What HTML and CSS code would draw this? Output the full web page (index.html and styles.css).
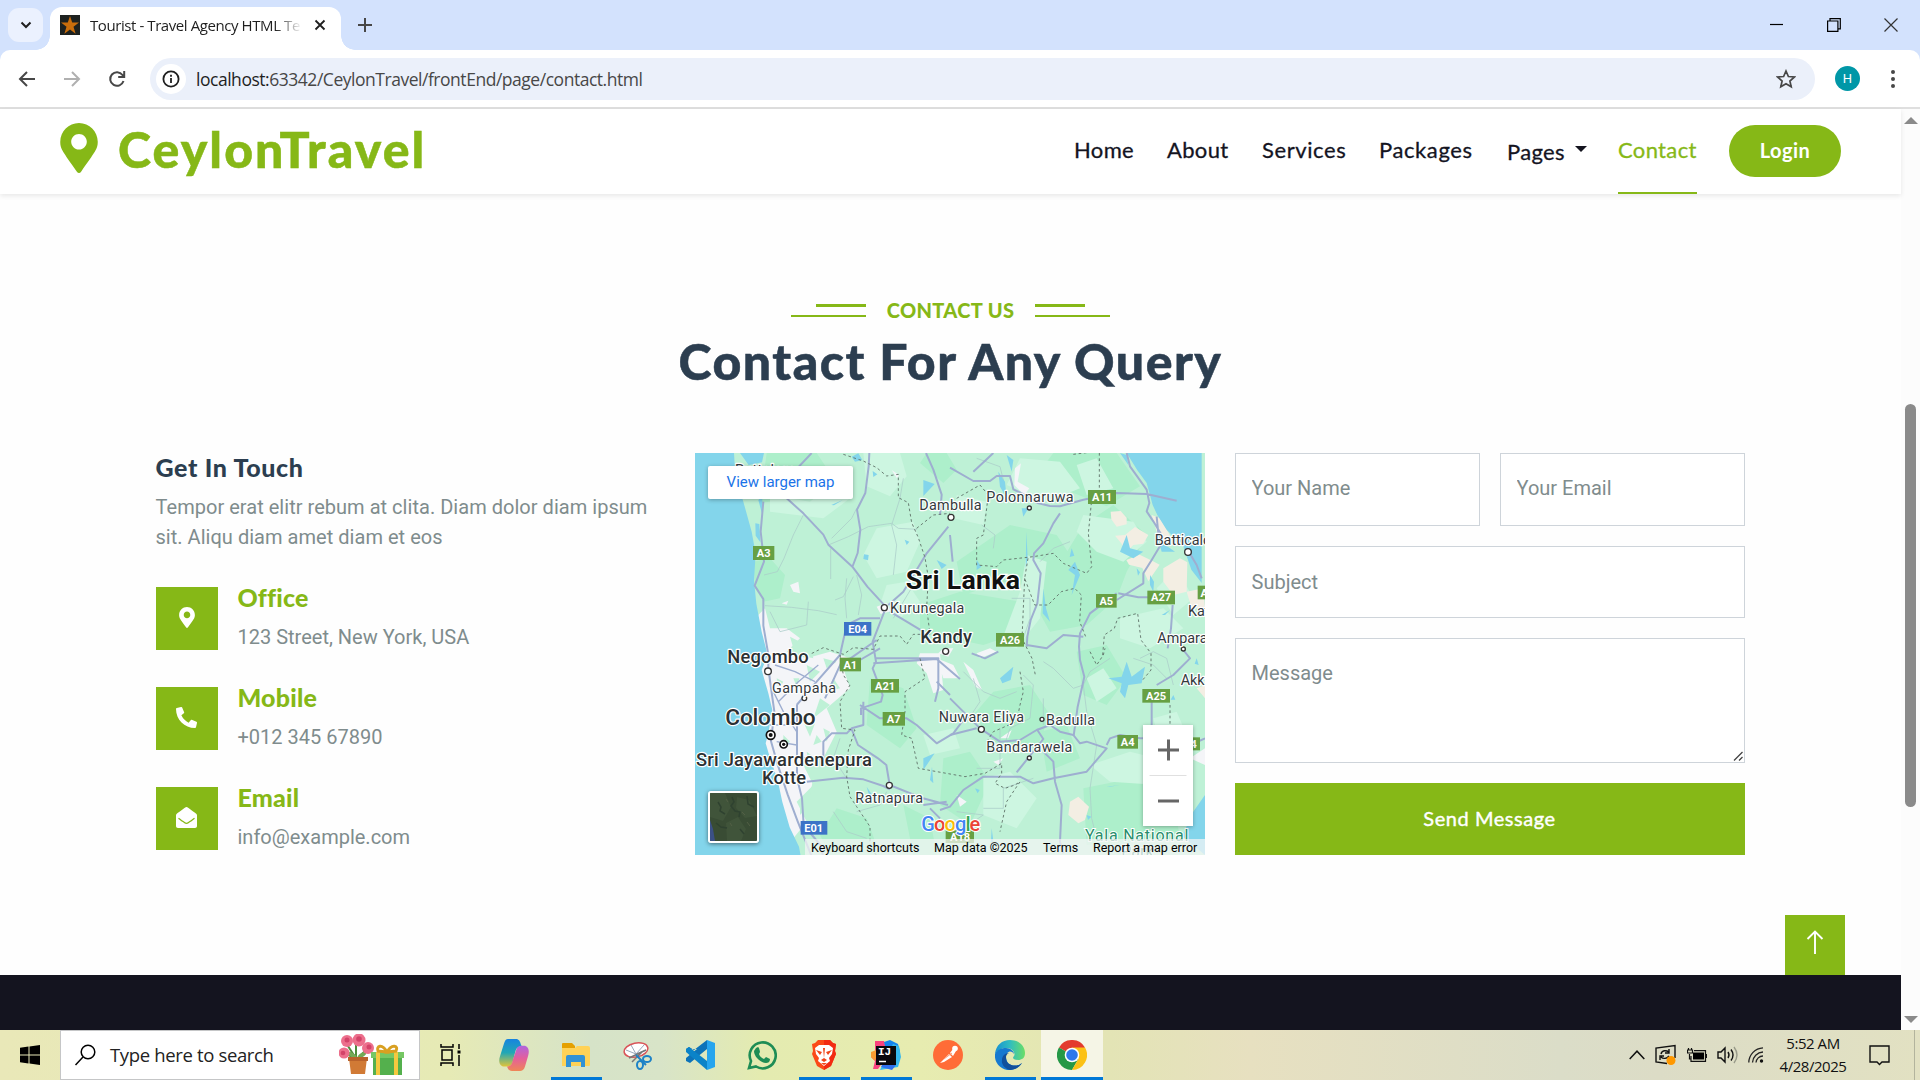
FILE: index.html
```html
<!DOCTYPE html>
<html lang="en">
<head>
<meta charset="utf-8">
<title>Tourist - Travel Agency HTML Template</title>
<link rel="stylesheet" href="styles.css">
</head>
<body>
<header class="tabstrip">
  <div class="tab-search"><svg width="12" height="12" viewBox="0 0 12 12"><path d="M1.5 3.5 6 8l4.500-4.500" fill="none" stroke="#1f1f1f" stroke-width="2"/></svg></div>
  <div class="tab">
    <svg class="favicon" width="20" height="20" viewBox="0 0 20 20"><rect width="20" height="20" fill="#1d2120"/><path d="M10 1l2.200 6.500H19l-5.500 4.200 2.100 7L10 14.600l-5.600 4.100 2.100-7L1 7.500h6.800z" fill="#c96d0c"/></svg>
    <span class="tab-title">Tourist - Travel Agency HTML Te</span>
    <svg class="tab-close" width="12" height="12" viewBox="0 0 12 12"><path d="M1.500 1.500l9 9m0-9l-9 9" stroke="#1f1f1f" stroke-width="1.800"/></svg>
  </div>
  <svg class="tab-new" width="14" height="14" viewBox="0 0 14 14"><path d="M7 0v14M0 7h14" stroke="#474747" stroke-width="2"/></svg>
  <div class="window-controls">
    <svg width="14" height="14" viewBox="0 0 14 14"><path d="M0 6.500h13" stroke="#000" stroke-width="1.200"/></svg>
    <svg width="14" height="14" viewBox="0 0 14 14" fill="none" stroke="#000" stroke-width="1.200"><path d="M.6 3h10.300v10.300H.6zM3 3V.6h10.300v10.300H11"/></svg>
    <svg width="14" height="14" viewBox="0 0 14 14"><path d="M.5.5l13 13m0-13l-13 13" stroke="#333" stroke-width="1.200"/></svg>
  </div>
</header>
<div class="toolbar-wrap">
<div class="toolbar">
  <svg class="nav-icon" width="18" height="18" viewBox="0 0 18 18" fill="none" stroke="#474747" stroke-width="2"><path d="M17 9H2.500M9 2L2 9l7 7"/></svg>
  <svg class="nav-icon" width="18" height="18" viewBox="0 0 18 18" fill="none" stroke="#b0b0b0" stroke-width="2"><path d="M1 9h14.500M9 2l7 7-7 7"/></svg>
  <svg class="nav-icon" width="18" height="18" viewBox="0 0 18 18" fill="none" stroke="#474747" stroke-width="2"><path d="M15.500 11A6.800 6.800 0 1 1 14.500 5L16 6.600M16.200 1v6h-6"/></svg>
  <div class="omnibox">
    <span class="site-info"><svg width="18" height="18" viewBox="0 0 18 18"><circle cx="9" cy="9" r="7.600" fill="none" stroke="#1f1f1f" stroke-width="1.800"/><path d="M9 8v5M9 4.700v2" stroke="#1f1f1f" stroke-width="1.800"/></svg></span>
    <span class="url"><b>localhost:</b>63342/CeylonTravel/frontEnd/page/contact.html</span>
    <svg class="star" width="20" height="20" viewBox="0 0 20 20"><path d="M10 2l2.400 5.500 6 .5-4.500 4 1.300 5.800L10 14.700l-5.200 3.100L6.100 12 1.600 8l6-.5z" fill="none" stroke="#474747" stroke-width="1.700"/></svg>
  </div>
  <span class="avatar">H</span>
  <svg class="kebab" width="6" height="20" viewBox="0 0 6 20" fill="#474747"><circle cx="3" cy="3" r="2"/><circle cx="3" cy="10" r="2"/><circle cx="3" cy="17" r="2"/></svg>
</div>
</div>

<div class="viewport">
<main class="page">
  <nav class="navbar">
    <a class="brand">
      <svg class="brand-pin" width="38" height="50" viewBox="0 0 384 512"><path fill="#86b817" d="M172.268 501.670C26.970 291.031 0 269.413 0 192 0 85.961 85.961 0 192 0s192 85.961 192 192c0 77.413-26.970 99.031-172.268 309.670-9.535 13.774-29.930 13.773-39.464 0zM192 272c44.183 0 80-35.817 80-80s-35.817-80-80-80-80 35.817-80 80 35.817 80 80 80z"/></svg>
      <span class="brand-name">CeylonTravel</span>
    </a>
    <div class="menu">
      <a class="menu-item home">Home</a>
      <a class="menu-item about">About</a>
      <a class="menu-item services">Services</a>
      <a class="menu-item packages">Packages</a>
      <a class="menu-item pages">Pages<i class="caret"></i></a>
      <a class="menu-item contact active">Contact</a>
      <a class="login">Login</a>
    </div>
  </nav>

  <section class="contact-section">
    <div class="heading">
      <div class="kicker">
        <span class="lines left"><i></i><i></i></span>
        <span class="kicker-text">CONTACT US</span>
        <span class="lines right"><i></i><i></i></span>
      </div>
      <h1>Contact For Any Query</h1>
    </div>
    <div class="columns">
      <div class="info">
        <h5 class="touch">Get In Touch</h5>
        <p class="intro">Tempor erat elitr rebum at clita. Diam dolor diam ipsum sit. Aliqu diam amet diam et eos</p>
        <div class="row">
          <span class="row-icon"><svg width="16" height="21" viewBox="0 0 384 512"><path fill="#fff" d="M172.268 501.670C26.970 291.031 0 269.413 0 192 0 85.961 85.961 0 192 0s192 85.961 192 192c0 77.413-26.970 99.031-172.268 309.670-9.535 13.774-29.930 13.773-39.464 0zM192 272c44.183 0 80-35.817 80-80s-35.817-80-80-80-80 35.817-80 80 35.817 80 80 80z"/></svg></span>
          <div><h5>Office</h5><p>123 Street, New York, USA</p></div>
        </div>
        <div class="row">
          <span class="row-icon"><svg width="21" height="21" viewBox="0 0 512 512"><path fill="#fff" d="M497.390 361.800l-112-48a24 24 0 0 0-28 6.900l-49.600 60.600A370.660 370.660 0 0 1 130.600 204.110l60.600-49.600a23.940 23.940 0 0 0 6.900-28l-48-112A24.160 24.160 0 0 0 122.600.61l-104 24A24 24 0 0 0 0 48c0 256.500 207.900 464 464 464a24 24 0 0 0 23.400-18.600l24-104a24.290 24.290 0 0 0-14.010-27.600z"/></svg></span>
          <div><h5>Mobile</h5><p>+012 345 67890</p></div>
        </div>
        <div class="row">
          <span class="row-icon"><svg width="21" height="21" viewBox="0 0 512 512"><path fill="#fff" d="M512 464c0 26.510-21.490 48-48 48H48c-26.510 0-48-21.490-48-48V200.724a48 48 0 0 1 18.387-37.776c24.913-19.529 45.501-35.365 164.200-121.511C199.412 29.170 232.797-.347 256 .003c23.198-.354 56.596 29.172 73.413 41.433 118.687 86.137 139.303 101.995 164.200 121.512A48 48 0 0 1 512 200.724V464zm-65.666-196.605c-2.563-3.728-7.700-4.595-11.339-1.907-22.845 16.873-55.462 40.705-105.582 77.079-16.825 12.266-50.210 41.781-73.413 41.430-23.211.344-56.559-29.143-73.413-41.430-50.114-36.370-82.734-60.204-105.582-77.079-3.639-2.688-8.776-1.821-11.339 1.907l-9.072 13.196a7.998 7.998 0 0 0 1.839 10.967c22.887 16.899 55.454 40.690 105.303 76.868 20.274 14.781 56.524 47.813 92.264 47.573 35.724.242 71.961-32.771 92.263-47.573 49.850-36.179 82.418-59.970 105.303-76.868a7.998 7.998 0 0 0 1.839-10.967l-9.071-13.196z"/></svg></span>
          <div><h5>Email</h5><p>info@example.com</p></div>
        </div>
      </div>

      <div class="map">
        <svg class="map-canvas" width="510" height="402" viewBox="15 24 1530 1206">
          <rect x="15" y="24" width="1530" height="1206" fill="#bef1d6"/>
          <!-- vegetation -->
          <g fill="#adefcb">
            <path d="M230 24h150l40 60-60 70-150 20zM190 350l50-10 45 50-15 70-50 10-25-40zM770 24l30 50-40 40-70-60 20-30zM1090 24h190l70 100-100 60-150-60-40-60zM960 240l140 30 60 90-40 80-180-30-120 40-20-100zM1180 240l90-60 100 90-60 110-30 80-90 80-110 20-50-90 40-50zM690 480l120-40 180 30 10 90-120 40-190-40zM540 700l100 30 40 120-50 60-100-70zM1160 620l90-20 60 100-60 80-70-30zM910 740l110-20 60 90-40 100-130-20-60-80zM1050 860l80-20 40 100-100 40zM1180 1030l150-30 120 60 20 120-280 20zM440 1090l90 30 40 110H420l-30-60zM760 940l80-20 60 90-60 130-90-60zM640 1080l80 40 20 110h-70z"/>
          </g>
          <g fill="#cdf6e1">
            <path d="M520 24h110l20 70-50 60-70-30zM560 250l110-20 20 60-40 90-90 20-40-70zM240 150l120 20 60-50 60 40-80 60-160-20zM990 40l120 10 60 80-100 40-120-50zM1180 210l150 20 40 60-70 60-80-30-60-60zM800 150l90 20-10 70-90-20zM1010 330l60 20-20 170-70 90-50-10 60-160zM1400 430l60-60 50 90-60 50zM1290 520l130-30 60 60-100 60-90-30zM1200 960l120-40 160 40-70 60-150-10zM590 420l60-10 40 60-60 50-60-40zM1160 60l60-20 50 90-80 20zM1190 700l50-30 40 60-60 40zM700 870l90-20 20 60-90 20zM880 1000l80-20 80 80-60 90-100-40zM1390 820l70-20 30 70-80 30z"/>
          </g>
          <!-- built-up and sand -->
          <g fill="#f4f5f8">
            <path d="M205 510l20-20 15 60 50 0 40 30-40 40 60 20 70-20 60 20-20 30 20 60-70 60 30 70-40 80-60 20 30 60-50 50 30 60-40 50 20 70 0 40-25 10-60-160-45-110-15-100 10-90-20-80-20-90zM690 625l60 0 10 110-30 10-20-60-30-30zM740 640l50 20 20 40-50 0zM300 420l25-10 5 35-20-5zM975 70l18-15-10 55 35 20-15 20-30-30zM820 650l30 25 26 60-20-10zM800 1050l30 20-20 15zM560 485l30-12 12 26-30 8zM860 625l40-15 20 10-50 20zM760 610l30 0-15 25-30-10zM930 880l35-25-10 25zM1500 940l45 20v-50zM910 950l30-10-15 20zM275 475l20-8-5 12zM605 75l22 15-6 10z"/>
          </g>
          <g fill="#f3eee3">
            <path d="M1262 200l30-2 18 20 0 20-30 7-16-22zM1275 272l30-2 30-24 20 12 20 12-15 26-30 4-25 24-10-28zM1309 345l40-16 40 20 20 10-34 50-18-40-40-10zM1420 370l50-30 22 12-2 88-40 10-30-40zM1385 210l25 10 35 60-15 25-30-45zM1490 440l50-10 5 60-40 0zM1140 1070l25-15 32 30-12 40-20 10-30-25zM1520 730l25-10v40z"/>
          </g>
          <g fill="#bef1d6">
            <path d="M300 575l30 15-20 20zM350 660l40 20-30 30zM390 760l30 20-50 40zM340 830l35 5-15 40zM280 870l20 20-20 20zM330 630l30-20 10 30zM400 640l40 10-30 20zM350 920l40 30-30 20zM370 1000l30 20-40 30zM260 700l20 10-15 25zM430 700l20 30-40 10zM380 870l15 20-25 10zM310 700l18 0-8 25zM330 1060l20 30-20 20zM300 980l20 10-10 20zM400 850l20 10-10 30z"/>
          </g>
          <!-- water -->
          <g fill="#83d5eb">
            <path d="M15 24h117l4 70 24 76 25 90 12 66-5 80 7 70 16 84 18 70-18 45 20 70 12 50-12 70-8 30 12 40 24 70 14 66 22 76 28 58 10 55H15z"/>
            <path d="M1310 24l32 52 28 38 18 66 14 30 28 44 50 50 24 70 31 40V24z"/>
            <path d="M1545 1050l-38 54-30 70 68 56z"/>
            <path d="M150 24h72l-6 28-40 8zM196 235l12 2 3 55-14-20zM205 165l12-10v55zM424 180l34-15-26 16zM485 35l20-10 12 20-22 5zM548 78l14 10-12 8zM700 105l34 12-34 36zM644 284l14 6-8 10zM522 328l14 2-2 16-14-4zM925 80l20 30 5 50-20-35zM950 30l20 15-5 35zM995 190l20 0-15 25zM1145 310l8 22-14 4zM1155 350l15 40-25 60 10-60-20-15zM1060 430l8 60 12 40-22-25zM740 345l30 15-15 12zM860 345l14 20-14 10zM1009 260l4 80-6 30zM1310 270l10 40 40 10-30 20-40-20zM1405 285l50 35-40 0zM1380 390l12 20-2 30-10-20zM1415 510l25-15-15 15zM1340 370l10 12-6 10zM930 700l40-35-8 40-25 10zM1310 650l15 45 40-30-10 50-40 5-10 40-15-20 5-25-40-15 40-5zM700 940l34-15-34 50zM720 1005l6-40 4 50zM530 1025l20 30-10 6zM905 1150l8 60-12 15zM1190 1110l14 5-10 10zM1520 640l6 20-12-4zM1450 750l6 14-14 0zM1250 1025l40-5-30 5zM855 1030l14 5-6 10zM1290 24l20 6 5 30z"/>
          </g>
          <!-- local roads -->
          <g fill="none" stroke="#abcdca" stroke-width="2.300">
            <path d="M340 210l-30 60-28 70-20 40-40 10M415 300l60-25 60-30 70-10 20 15 56 3M422 310v92M500 190l-15 30-60 60M225 482l80 5 80 10 55 12M470 400l-5 60 5 60M490 395l-30 60-25 10M500 390l15 60-10 60M640 100l-10 60-25 80 15 60-10 90M700 390l-30 30-60 100M240 500l30 60 80-20 5-70M860 40l70 25 10 40M875 240l40 30-5 40M965 460h55v60l-20 60M1050 350l40-40 50-20M1330 640l60 20 40 40M1180 720l10 80 30 100-20 130 5 90 20 80M850 700l20 70-40 60M820 680l60 60 50 20 50-20M1000 690l30 30-10 100-60 30-20 60M880 1090h60v-60l90-30M800 1100l80 10-60 40M450 880l-20 60 40 60M500 1100l70-20 20-40M1060 760v80M430 1100l40 60 60 20"/>
            <path d="M930 850v120h-70M1060 650l30 20 60 60 30-10 20-40 60-40M1350 640l40-20 40 20 20 80"/>
          </g>
          <!-- highways -->
          <g fill="none" stroke="#9eaed0" stroke-width="6" stroke-linejoin="round">
            <path d="M365 24l-80 85M290 160l50 45 60 64 15 30 72 66 45 60 55 60M538 24l-2 40-10 80-25 50 10 60-8 70-16 42M220 170l-8 90 10 90-28 72 26 40v80l15 87 0 40 8 60 10 70-10 90 20 70 30 90 30 80 40 100 12 30M708 24l22 50 25 75-5 60M595 480l45-40 70-115 65-80M780 68l70 40h50l20-15 40 0 10 40 40 20 30 20 40 10 30 1 70-20 100-20 90 3 90 20M1310 24l10 40 50 70 8 40-8 25 20 30 30 50M1400 215l5 50 10 30-30 50-25 40v30l-80 50M1110 205l-20 30-30 60-28 30-2 20 22 40-10 90-20 50-10 50-2 30M1280 445l-80 60-30 60-3 40 3 40 13 50-20 90-12 87"/>
            <path d="M850 80l60-56M780 270l8 80M600 500l50 30 50 30M1010 600l60 10 50-40 60 5M570 520l-60 0-40 20-20 90-70 80-60 70M583 500l-35 90 10 60-10 20 30 80-5 20-60 20v20M455 650l-50 110M460 655l100-70M570 610l-60 35M550 655l190-13 70 60M555 640h190v90l-10 40M1285 445l60 12h40M1448 480l-5 70-10 60M845 625l40 15 40-20"/>
            <path d="M510 780l60 40 80 0 30 20 60 55 50-30 30-40M740 710l40 40M520 770v70l-35 10-15 15h-45l-25 25v50l-70-1M321 780v220l15 60 5 80 50 60 10 40M484 850l20 50 60 40 25 20 10 60 100 40 75 20M350 1010l110-12 60 5 60 20 20 10M700 1080l70-10M720 1090l30 30"/>
            <path d="M780 760l90 90 60 40 60-5 50-30 40-15 30 20 40 10 20 25 20-5 60 20-60 70-100 20-60 15-40-20-40 0-70 0-60 40-40 50-30 10M780 870l80-20M1040 852l20 30-80 100M1060 920l30 30 5 60 20 70-5 110 10 35M1250 900l10-20 30-10 60 10h50M1385 740l0 120M1400 720l50-30 50-50-20-25M1500 900l45-20M1490 310l30 50 15 40"/>
            <path d="M250 740l30 60 40 60M240 840l60 0M260 890l60 10M255 660l60 20 60 30M265 770l60-60 60-50" stroke-width="4"/>
          </g>
          <!-- province borders -->
          <g fill="none" stroke="#62756c" stroke-width="2.800" stroke-dasharray="8 8">
            <path d="M460 28l60 20 40 20 30 25 35-5 0 70 30 15 10 60 20 45 20 60 10 60-5 90 10 80-50 0-20 30-20-25-60 0-20 40-60-5-30 20-60-20-40 20M680 250l50-40 50-5M800 160l70-40 25 30-15 120-20 10 0 80 60 5 20-20 90-10 60-10 30 30 70 30 15-20-10-100 10-100M1150 28l40-5M1228 24v110l10 10M1014 340l-10 60 30 80 40 0 40-40 40-10 20 20-5 80 20 50M1004 400l-8 180 30 60 10 50 M1238 630l5-60 30-20 10-30 60-15 10 80 30 40 0 50-25 30M1200 620l20 40 20-30 5-20M1440 780v60l-10 100M450 630l10 60 20 30-30 50 5 80 40 5-20 60-5 80 10 60 20 30 40 60 0 60 30 40M690 640l15 60-60 40 0 60-10 70 30 10 20 90 140 25 60-10 50-30 0 30-20 30 30 15 30-10 15-10-40 60-20 90M990 680l10 60-10 40-10 50-70 30-20 30"/>
          </g>
          <!-- places -->
          <g fill="#fff" stroke="#333" stroke-width="4">
            <circle cx="583" cy="488" r="9"/><circle cx="783" cy="217" r="9"/><circle cx="1018" cy="189" r="6"/><circle cx="1494" cy="321" r="10"/><circle cx="767" cy="619" r="9"/><circle cx="234" cy="679" r="10"/><circle cx="343" cy="760" r="7"/><circle cx="598" cy="1021" r="9"/><circle cx="874" cy="853" r="9"/><circle cx="1056" cy="823" r="6"/><circle cx="1018" cy="939" r="6"/><circle cx="1480" cy="612" r="6"/>
            <g stroke="#111" stroke-width="5"><circle cx="242" cy="870" r="13"/><circle cx="281" cy="898" r="11"/></g>
            <g fill="#111" stroke="none"><circle cx="242" cy="870" r="6"/><circle cx="281" cy="898" r="5"/></g>
          </g>
          <g class="place">
            <text x="135" y="90" textLength="180">Puttalam</text>
            <text x="688" y="196" textLength="187">Dambulla</text>
            <text x="889" y="172" textLength="262">Polonnaruwa</text>
            <text x="1394" y="300">Batticaloa</text>
            <text x="600" y="503" textLength="223">Kurunegala</text>
            <text x="1494" y="513">Kattankudy</text>
            <text x="1402" y="594">Ampara</text>
            <text x="246" y="743" textLength="192">Gampaha</text>
            <text x="496" y="1073" textLength="203">Ratnapura</text>
            <text x="746" y="832" textLength="256">Nuwara Eliya</text>
            <text x="1068" y="840" textLength="147">Badulla</text>
            <text x="889" y="922" textLength="258">Bandarawela</text>
            <text x="1472" y="719">Akkaraipattu</text>
          </g>
          <g class="place city">
            <text x="691" y="595" textLength="155">Kandy</text>
            <text x="112" y="655" textLength="244">Negombo</text>
            <text x="106" y="839" textLength="271" class="capital">Colombo</text>
            <text x="18" y="962" textLength="528">Sri Jayawardenepura</text>
            <text x="216" y="1018" textLength="132">Kotte</text>
          </g>
          <text class="country" x="647" y="431" textLength="343">Sri Lanka</text>
          <g class="park"><text x="1185" y="1188" textLength="310">Yala National</text><text x="1294" y="1236">Park</text></g>
          <!-- route shields -->
          <g class="shield">
            <rect x="189" y="303" width="64" height="42"/><text x="221" y="336">A3</text>
            <rect x="1194" y="135" width="84" height="42"/><text x="1236" y="168">A11</text>
            <rect x="1218" y="447" width="62" height="41"/><text x="1249" y="480">A5</text>
            <rect x="1372" y="437" width="83" height="41"/><text x="1413" y="469">A27</text>
            <rect x="1523" y="422" width="62" height="41"/><text x="1552" y="455">A4</text>
            <rect x="918" y="564" width="84" height="41"/><text x="960" y="597">A26</text>
            <rect x="449" y="638" width="64" height="41"/><text x="481" y="671">A1</text>
            <rect x="543" y="702" width="84" height="41"/><text x="585" y="735">A21</text>
            <rect x="578" y="801" width="67" height="41"/><text x="611" y="834">A7</text>
            <rect x="1357" y="732" width="83" height="41"/><text x="1398" y="765">A25</text>
            <rect x="1282" y="870" width="62" height="41"/><text x="1313" y="902">A4</text>
            <rect x="1467" y="877" width="63" height="39"/><text x="1500" y="909">A4</text>
            <rect x="767" y="1156" width="85" height="38"/><text x="810" y="1189">A18</text>
            <rect class="blue" x="462" y="531" width="82" height="41"/><text x="503" y="564">E04</text>
            <rect class="blue" x="332" y="1128" width="80" height="41"/><text x="371" y="1160">E01</text>
          </g>
          <text class="google" x="694" y="1157" textLength="177"><tspan fill="#4285f4">G</tspan><tspan fill="#ea4335">o</tspan><tspan fill="#fbbc05">o</tspan><tspan fill="#4285f4">g</tspan><tspan fill="#34a853">l</tspan><tspan fill="#ea4335">e</tspan></text>
        </svg>
        <a class="larger-map">View larger map</a>
        <div class="satellite"><svg width="47" height="48" viewBox="0 0 47 48"><rect width="47" height="48" fill="#394c34"/><path d="M0 0h15l6 14-8 14-13-4zM27 4l12 3 8 16-12 2-9-10zM16 30l12-6 8 12-5 12H17z" fill="#40543a"/><path d="M8 9l3 5-1 4 5 3M22 4l2 5-3 4 4 5 5 1-1 5M37 3l1 8 6 3M6 30l5 4 6 1M30 36l4 5" fill="none" stroke="#2f4230" stroke-width="1.500"/><path d="M16 6l2 3m14 10l3 3m-15 8l2 3m15-4l3 4" stroke="#525f45"/><path d="M0 27l3 9 2 12H0z" fill="#3b5086"/></svg></div>
        <div class="zoom"><svg width="50" height="101" viewBox="0 0 50 101"><path d="M15 25h21M25.500 14.500v21M15 76h21" stroke="#666" stroke-width="3"/><path d="M6.500 50.500h37" stroke="#e0e0e0"/></svg></div>
        <div class="attribution"><span class="shortcuts">Keyboard shortcuts</span><span class="data">Map data ©2025</span><span class="terms">Terms</span><span class="report">Report a map error</span></div>
      </div>

      <form class="form">
        <input class="field" placeholder="Your Name">
        <input class="field" placeholder="Your Email">
        <input class="field wide subject" placeholder="Subject">
        <div class="wide message-box">
          <textarea class="field message" placeholder="Message"></textarea>
          <svg class="grip" width="10" height="10" viewBox="0 0 10 10"><path d="M1 9.500L9.500 1M6 9.500L9.500 6" stroke="#444" stroke-width="1.300"/></svg>
        </div>
        <button class="send" type="button">Send Message</button>
      </form>
    </div>
  </section>
  <a class="to-top"><svg width="22" height="26" viewBox="0 0 22 26"><path d="M11 25V2.500M3.500 10L11 2.500l7.500 7.500" fill="none" stroke="#fff" stroke-width="1.900"/></svg></a>
  <footer class="footer"></footer>
</main>
<div class="scrollbar"><i class="arrow-up"></i><i class="thumb"></i><i class="arrow-down"></i></div>
</div>

<footer class="taskbar">
  <div class="start"><svg width="20" height="20" viewBox="0 0 20 20"><path d="M0 2.800l8.500-1.200v8H0zM9.500 1.500L20 0v9.600H9.500zM0 10.500h8.500v8L0 17.300zM9.500 10.500H20V20L9.500 18.600z"/></svg></div>
  <div class="search">
    <svg class="search-glyph" width="22" height="22" viewBox="0 0 22 22" fill="none" stroke="#000" stroke-width="1.500"><circle cx="14" cy="8" r="6.800"/><path d="M9 13l-7.500 8"/></svg>
    <span>Type here to search</span>
    <svg class="gifts" width="66" height="42" viewBox="0 0 66 42">
      <g stroke="#4d8b3c" stroke-width="2" fill="none"><path d="M17 26V9M18 26L7 9M17 26L29 14M17 25L6 19"/></g>
      <g fill="#74a957"><ellipse cx="13" cy="21" rx="5" ry="2" transform="rotate(30 13 21)"/><ellipse cx="23" cy="21" rx="5" ry="2" transform="rotate(-35 23 21)"/></g>
      <g fill="#ec6f8c"><circle cx="8" cy="7" r="6"/><circle cx="20" cy="6" r="6.500"/><circle cx="5" cy="19" r="5.500"/><circle cx="29" cy="14" r="6"/></g>
      <g fill="#d34369"><circle cx="8" cy="6" r="2.500"/><circle cx="20" cy="5" r="2.800"/><circle cx="4" cy="19" r="2.300"/><circle cx="30" cy="13" r="2.500"/></g>
      <path d="M10 24h18l-2 16H12z" fill="#d17a35"/><path d="M9 23h20v4H9z" fill="#b9622b"/>
      <path d="M34 22h29v19H34z" fill="#54b04d"/><path d="M32 18h33v6H32z" fill="#76c764"/><path d="M37 18h4v23h-4zM55 18h4v23h-4z" fill="#f4c93f"/><path d="M48 18c-5-9-11-6-9-1zM48 18c5-9 12-6 9-1z" fill="none" stroke="#d9a021" stroke-width="3"/>
    </svg>
  </div>
  <div class="apps">
    <div class="app taskview"><svg width="22" height="24" viewBox="0 0 22 24" fill="none" stroke="#000" stroke-width="1.500"><path d="M1 1v3h12V1M1 23v-3h12v3M2 7h10v10H2zM19 1v5M19 12v11"/><path d="M17.500 7.500h3v3h-3z" fill="#000" stroke="none"/></svg></div>
    <div class="app"><svg width="30" height="32" viewBox="0 0 30 28" preserveAspectRatio="none"><defs><linearGradient id="ca" x2="0" y2="1"><stop stop-color="#1683e0"/><stop offset=".5" stop-color="#21a7b5"/><stop offset="1" stop-color="#e0c43a"/></linearGradient><linearGradient id="cb" x2="0" y2="1"><stop stop-color="#b065dd"/><stop offset=".5" stop-color="#e45f9b"/><stop offset="1" stop-color="#ef8656"/></linearGradient></defs><path d="M9 0h8c3 0 4 2 5 5l1 2c-4-1-6 1-7 5l-2 7c-1 4-3 5-6 5H5c-4 0-6-4-4-9L5 4c1-3 2-4 4-4z" fill="url(#ca)"/><path d="M21 28h-8c-3 0-4-2-5-4 4 0 5-2 6-6l3-8c1-3 3-4 5-4h3c4 0 6 4 4 9l-3 9c-1 3-3 4-5 4z" fill="url(#cb)"/></svg></div>
    <div class="app running"><svg width="28" height="24" viewBox="0 0 28 24"><path d="M0 1q0-1 1-1h9l3 3v5H0z" fill="#e5a000"/><path d="M0 5h13l2-2h11q2 0 2 2v17q0 1-1 1H0z" fill="#ffd257"/><path d="M4 24V14q0-2 2-2h15q2 0 2 2v10h-4v-5H9v5z" fill="#3292d5"/></svg></div>
    <div class="app"><svg width="30" height="30" viewBox="0 0 30 30"><ellipse cx="13" cy="10" rx="12" ry="7" transform="rotate(-12 13 10)" fill="#fff" stroke="#d95459" stroke-width="1.500"/><path d="M3 10l10 4 8-9M8 5l5 9 10-4" stroke="#99a8ba" fill="none"/><path d="M6 18l17-8M9 22l10-10" stroke="#777" stroke-width="1.500"/><g fill="none" stroke="#1d82c7" stroke-width="2"><ellipse cx="24" cy="19" rx="4" ry="3"/><ellipse cx="17" cy="25" rx="3" ry="4"/><path d="M13 15l10 10"/></g></svg></div>
    <div class="app"><svg width="30" height="30" viewBox="0 0 30 30"><path d="M1 9l3-2 5 3L22 0v9L5 23l-4-2v-3L12 9z" fill="#0d73b9"/><path d="M1 9l3-2L22 21v9L1 12z" fill="#0b83c8"/><path d="M22 0l8 3v24l-8 3z" fill="#26a5ee"/></svg></div>
    <div class="app"><svg width="30" height="30" viewBox="0 0 30 30"><path d="M2 28l2-7A13 13 0 1 1 9 26.500z" fill="none" stroke="#1e8d55" stroke-width="2.600"/><path d="M9 8l2-1c1 0 2 4 2 5l-1 2c1 3 3 4 5 5l2-2 4 2c0 3-2 4-4 4-5 0-12-6-12-12z" fill="#1e8d55"/></svg></div>
    <div class="app running"><svg width="26" height="30" viewBox="0 0 26 30"><path d="M7 0h12l3 3 3 1-1 7 1 3-5 12-7 4-7-4L1 14l1-3L1 4l3-1z" fill="#fb4a18"/><path d="M13 0h6l3 3 3 1-1 7 1 3-5 12-7 4z" fill="#f22b12"/><path d="M8 5h10l4 3-1 6-3 4 1 3-6 5-6-5 1-3-3-4-1-6z" fill="#fff"/><path d="M5 10l6 2-2 3zM21 10l-6 2 2 3zM12 8l1 10-3 2 3 2 3-2-3-2 1-10zM10 23h6l-3 2z" fill="#f04418"/></svg></div>
    <div class="app running"><svg width="30" height="30" viewBox="0 0 30 30"><path d="M4 1l9 0 4 14-10 14-5 0 2-8-4-4 4-5z" fill="#f9437f"/><path d="M13 2l6-2 8 4 2 8-12 5z" fill="#1483ed"/><path d="M22 4l6 2 2 11-3 10-18 3z" fill="#36b8ee"/><path d="M15 17l10 8-4 5-11-3z" fill="#2f70ee"/><path d="M0 12l8-3-4 12-4-4z" fill="#f99d31"/><path d="M5 6h20v19H5z" fill="#08080d"/><text x="7" y="15" font-family="Liberation Mono, monospace" font-weight="700" font-size="11" fill="#fff" textLength="13">IJ</text><path d="M8 21.500h7" stroke="#fff" stroke-width="1.500"/></svg></div>
    <div class="app"><svg width="30" height="30" viewBox="0 0 30 30"><circle cx="15" cy="15" r="15" fill="#ff6c37"/><path d="M7 23l9-9 3 3-8 5zM17 13l3-4 3 2-3 5z" fill="#fff"/><circle cx="22" cy="8.500" r="2.800" fill="#fff"/><path d="M11 19l8-6" stroke="#ff9e7a"/></svg></div>
    <div class="app running"><svg width="30" height="30" viewBox="0 0 30 30"><defs><linearGradient id="ed"><stop stop-color="#1790d3"/><stop offset=".5" stop-color="#31bdbf"/><stop offset="1" stop-color="#6ade66"/></linearGradient></defs><path d="M0 14C1 5 7 0 15 0c9 0 15 6 15 13 0 5-3 7-7 7-5 0-6-2-4-4 2-3-2-8-7-8-6 0-10 3-12 6z" fill="url(#ed)"/><path d="M0 14c2-4 6-6 11-6 4 0 8 3 8 6-3-5-8-2-8 3 0 7 6 10 13 8l3-2c-3 5-8 7-12 7C6 30-1 23 0 14z" fill="#1679d0"/><path d="M11 17c0 7 6 10 13 8l3-2c-3 5-8 7-12 7-5-1-9-6-8-10 0-4 3-7 7-7-2 1-3 2-3 4z" fill="#12509b"/></svg></div>
    <div class="app running current"><svg width="30" height="30" viewBox="0 0 30 30"><path d="M15 15L2 7.500A15 15 0 0 1 28 7.500z" fill="#e33b2e"/><path d="M15 15L2 7.500A15 15 0 0 0 15 30l6.500-11.200z" fill="#259846"/><path d="M15 7.500h13A15 15 0 0 1 15 30l6.500-11.200z" fill="#fbc116"/><circle cx="15" cy="15" r="7.300" fill="#fff"/><circle cx="15" cy="15" r="5.800" fill="#2f78ec"/></svg></div>
  </div>
  <div class="tray">
    <svg width="16" height="10" viewBox="0 0 16 10"><path d="M.7 9L8 1.200 15.300 9" fill="none" stroke="#111" stroke-width="1.500"/></svg>
    <svg width="22" height="22" viewBox="0 0 22 22" fill="none" stroke="#111" stroke-width="1.400"><path d="M12 19.500L1 18V4l19-2.500V14"/><path d="M6 10c1-4 5-4 8-2M14 5v4h-4M14 12c-2 3-6 3-8 1M5 16v-4h4"/><circle cx="16" cy="16.500" r="4.500" fill="#ff9800" stroke="none"/></svg>
    <svg width="20" height="14" viewBox="0 0 20 14"><path d="M6 4.500h11v7H6z" fill="#000"/><path d="M4 8v5.300h14.500V2.700H7M19.500 6v4M2.500 6v5h2M.5 2h5v3h-5zM1.500 0v2M4.500 0v2" fill="none" stroke="#111" stroke-width="1.200"/></svg>
    <svg width="21" height="18" viewBox="0 0 21 18" fill="none" stroke="#111" stroke-width="1.400"><path d="M1 6h3l4-4v14l-4-4H1zM11 6q2 3 0 6M14 3.500q4 5.500 0 11"/><path d="M17 1q6 8 0 16" stroke="#999b8a"/></svg>
    <svg width="16" height="16" viewBox="0 0 16 16" fill="none" stroke="#222" stroke-width="1.300"><path d="M.8 15.500A15 15 0 0 1 15 .8M4.500 15.500A11 11 0 0 1 15 5M8 15.500A7 7 0 0 1 15 9"/><circle cx="13.500" cy="14" r="1.700" fill="#111" stroke="none"/></svg>
    <div class="clock"><span class="time">5:52 AM</span><span class="date">4/28/2025</span></div>
    <svg class="notify" width="21" height="21" viewBox="0 0 21 21"><path d="M1 1h19v16h-7l-2.500 2.500L8 17H1z" fill="none" stroke="#111" stroke-width="1.400"/></svg>
    <i class="show-desktop"></i>
  </div>
</footer>
</body>
</html>
```
FILE: styles.css
```css
* { box-sizing: border-box; }
body { margin: 0; width: 1920px; height: 1080px; overflow: hidden; display: flex; flex-direction: column; background: #fff; font-family: Roboto, sans-serif; color: #7f8c8d; }
svg { display: block; flex: none; }
h1, h5, p { margin: 0; }

/* browser chrome */
.tabstrip { height: 50px; flex: none; background: #d3e2fd; display: flex; align-items: center; padding-left: 8px; font-family: "Open Sans", sans-serif; }
.tab-search { width: 35px; height: 34px; border-radius: 11px; background: #ebf1fe; display: flex; align-items: center; justify-content: center; }
.tab { position: relative; align-self: flex-end; width: 291px; height: 43px; margin-left: 7px; padding: 0 15px 7px 10px; border-radius: 12px 12px 0 0; background: #fff; display: flex; align-items: center; }
.tab::before, .tab::after { content: ""; position: absolute; bottom: 0; width: 14px; height: 14px; }
.tab::before { left: -14px; background: radial-gradient(circle at 0 0, transparent 13.5px, #fff 14px); }
.tab::after { right: -14px; background: radial-gradient(circle at 100% 0, transparent 13.5px, #fff 14px); }
.tab-title { width: 212px; margin-left: 10px; margin-right: 12px; white-space: nowrap; overflow: hidden; color: #1f1f1f; font-size: 15px; letter-spacing: -.42px; -webkit-mask-image: linear-gradient(90deg, #000 185px, transparent 212px); }
.tab-new { margin-left: 17px; }
.window-controls { margin-left: auto; margin-right: 22px; display: flex; gap: 43px; }
.toolbar-wrap { flex: none; background: #d3e2fd; }
.toolbar { height: 59px; padding: 0 24px 0 18px; border-bottom: 2px solid #dfdfdf; border-radius: 10px 10px 0 0; background: #fff; display: flex; align-items: center; }
.nav-icon { margin-right: 27px; }
.omnibox { width: 1665px; height: 42px; margin-left: -3px; padding: 0 19px 0 6px; border-radius: 21px; background: #ebf0fa; display: flex; align-items: center; }
.site-info { width: 30px; height: 30px; border-radius: 50%; background: #fff; display: flex; align-items: center; justify-content: center; }
.url { margin-left: 10px; color: #474747; font: 17.5px "Open Sans", sans-serif; letter-spacing: -.47px; }
.url b { font-weight: 400; color: #1f1f1f; }
.star { margin-left: auto; }
.avatar { width: 25px; height: 25px; margin-left: 20px; border-radius: 50%; background: #0097a7; color: #fff; font-size: 13px; line-height: 25px; text-align: center; }
.kebab { margin-left: 30px; }

/* page */
.viewport { height: 921px; flex: none; display: flex; }
.page { position: relative; width: 1901px; display: flex; flex-direction: column; background: #fefefe; }
.scrollbar { width: 19px; background: #fcfcfc; display: flex; flex-direction: column; align-items: center; }
.arrow-up { margin-top: 8px; border: 7px solid transparent; border-top: 0; border-bottom: 7px solid #8a8a8a; }
.thumb { width: 11px; height: 403px; margin-top: 280px; border-radius: 6px; background: #8a8a8a; }
.arrow-down { margin-top: auto; margin-bottom: 7px; border: 7px solid transparent; border-bottom: 0; border-top: 7px solid #8a8a8a; }

.navbar { height: 85px; flex: none; padding: 0 60px; background: #fff; box-shadow: 0 2px 5px rgba(0,0,0,.09); display: flex; align-items: center; justify-content: space-between; font-family: Lato, sans-serif; }
.brand { display: flex; align-items: center; gap: 20px; color: #86b817; }
.brand-pin { margin-bottom: 8px; }
.brand-name { font-size: 50px; font-weight: 900; line-height: 60px; letter-spacing: 2.1px; -webkit-text-stroke: .5px #86b817; margin-top: -5px; }
.menu { height: 85px; display: flex; align-items: center; gap: 31px; }
.menu-item { height: 85px; line-height: 82px; font-size: 22px; letter-spacing: .35px; color: #14141f; -webkit-text-stroke: .3px currentColor; white-space: nowrap; }
.home { width: 62px; } .about { width: 64px; } .services { width: 86px; } .packages { width: 97px; }
.packages { letter-spacing: .6px; } .services { letter-spacing: .6px; }
.pages { width: 80px; display: flex; align-items: center; justify-content: space-between; line-height: 80px; }
.caret { border: 6px solid transparent; border-top-color: #14141f; border-bottom: 0; margin-top: -6px; }
.contact { width: 79px; margin-right: 1px; }
.active { color: #86b817; border-bottom: 2px solid #86b817; }
.login { width: 112px; height: 52px; margin-top: -1px; border-radius: 26px; background: #86b817; color: #fff; font-size: 20px; font-weight: 700; letter-spacing: .5px; line-height: 50px; text-align: center; }

.contact-section { flex: 1; padding: 104px 155.5px 0; }
.heading { display: flex; flex-direction: column; align-items: center; font-family: Lato, sans-serif; }
.kicker { height: 24px; display: flex; align-items: center; gap: 20px; color: #86b817; font-size: 20px; font-weight: 900; }
.kicker-text { width: 129px; white-space: nowrap; line-height: 23px; text-align: center; letter-spacing: .35px; }
.lines { width: 75px; height: 13px; display: flex; flex-direction: column; justify-content: space-between; }
.lines i { height: 3px; width: 50px; background: #86b817; }
.lines i + i { height: 2px; width: 75px; }
.lines.left { align-items: flex-end; }
h1 { margin-top: 9px; height: 68px; font-size: 50px; line-height: 60px; font-weight: 900; letter-spacing: 1.5px; color: #2c3e50; white-space: nowrap; -webkit-text-stroke: .5px #2c3e50; }
.columns { margin-top: 54px; display: grid; grid-template-columns: repeat(3, 510px); gap: 29.5px; }
h5 { font-family: Lato, sans-serif; font-size: 25px; line-height: 30px; font-weight: 900; color: #2c3e50; }
.touch { margin-top: -1px; letter-spacing: .65px; }
.info p { font-size: 20px; line-height: 30px; }
.info .intro { margin: 10px 0 35px; letter-spacing: .03px; }
.row { height: 63px; margin-bottom: 37px; display: flex; gap: 20px; }
.row-icon { width: 62px; height: 63px; background: #86b817; display: flex; align-items: center; justify-content: center; }
.row svg { margin-bottom: 2px; }
.row h5 { margin: -5px 0 10px; color: #86b817; letter-spacing: .2px; }

.map { position: relative; height: 402px; overflow: hidden; }
.place text { font-family: Roboto, sans-serif; font-size: 43px; fill: #333a3d; stroke: #fff; stroke-width: 7px; paint-order: stroke; stroke-linejoin: round; }
.city text { font-size: 55px; font-weight: 500; fill: #2c3133; }
.city .capital { font-size: 68px; }
.country { font: 700 80px Roboto, sans-serif; fill: #111; stroke: #fff; stroke-width: 8px; paint-order: stroke; }
.park text { font: 48px Roboto, sans-serif; fill: #278d6b; stroke: #fff; stroke-width: 6px; paint-order: stroke; }
.shield rect { fill: #67a043; }
.shield .blue { fill: #3c73c7; }
.shield text { font: 700 33px Roboto, sans-serif; fill: #fff; text-anchor: middle; }
.google { font: 500 60px Roboto, sans-serif; stroke: #fff; stroke-width: 6px; paint-order: stroke; }
.larger-map { position: absolute; left: 13px; top: 13px; width: 145px; height: 33px; border-radius: 2px; background: #fff; box-shadow: 0 1px 4px rgba(0,0,0,.3); color: #1a73e8; font-size: 15px; line-height: 32px; text-align: center; }
.satellite { position: absolute; left: 13px; top: 338px; width: 51px; height: 52px; border: 2px solid #fff; border-radius: 3px; overflow: hidden; box-shadow: 0 1px 4px rgba(0,0,0,.5); }
.zoom { position: absolute; left: 448px; top: 272px; width: 50px; height: 101px; background: #fff; box-shadow: 0 1px 4px rgba(0,0,0,.3); }
.attribution { position: absolute; right: 0; bottom: 0; height: 16px; padding: 0 8px 0 6px; display: flex; gap: 15px; background: rgba(245,245,245,.72); color: #000; font-size: 12.5px; line-height: 17px; white-space: nowrap; }
.shortcuts { width: 108px; } .data { width: 94px; } .terms { width: 35px; } .report { width: 104px; }

.form { height: 402px; display: grid; grid-template-columns: 1fr 1fr; grid-template-rows: 73px 72px 125px 72px; gap: 20px; }
.field { min-width: 0; border: 1px solid #ced4da; border-radius: 0; padding: 0 16px 3px; background: #fff; font: 20px Roboto, sans-serif; }
.field::placeholder { color: #7f8c8d; opacity: 1; }
.subject { padding-bottom: 1px; }
.wide, .send { grid-column: 1 / 3; }
.message-box { position: relative; display: flex; }
.message { flex: 1; padding-top: 22px; resize: none; }
.grip { position: absolute; right: 2px; bottom: 2px; }
.send { border: 0; padding: 0 0 3px; background: #86b817; color: #fff; font: 20px/24px Lato, sans-serif; letter-spacing: .55px; -webkit-text-stroke: .4px #fff; }
.to-top { position: absolute; right: 56px; bottom: 55px; width: 60px; height: 60px; background: #86b817; display: flex; align-items: center; justify-content: center; padding-bottom: 6px; }
.footer { height: 55px; flex: none; background: #14141f; }

/* taskbar */
.taskbar { height: 50px; flex: none; display: flex; align-items: center; color: #111; font-family: "Open Sans", sans-serif; background: linear-gradient(90deg, #e9e8b8 0, #e6eab5 450px, #d6e3c8 590px, #d8e4c8 660px, #e4ebb0 760px, #e7ecb0 920px, #e3e4b5 1110px, #e7e0c0 1250px, #dbddc8 1560px, #dcdcc6 1660px, #e2e1c2 1920px); }
.start { width: 60px; display: flex; justify-content: center; }
.search { width: 360px; height: 50px; border: 1px solid #c5c6c7; background: #fff; display: flex; align-items: center; color: #222; font-size: 18.5px; letter-spacing: -.35px; padding-left: 13px; }
.search span { width: 229px; margin-left: 14px; margin-top: -2px; white-space: nowrap; }
.apps { display: flex; height: 50px; margin-left: 1px; }
.app { width: 62px; height: 50px; display: flex; align-items: center; justify-content: center; position: relative; }
.taskview { padding-right: 2px; }
.running::after { content: ""; position: absolute; left: 6px; right: 5px; bottom: 0; height: 3px; background: #0078d7; }
.current { background: #f5f5e6; }
.current::after { left: 0; right: 0; }
.tray { margin-left: auto; height: 50px; display: flex; align-items: center; gap: 10px; }
.clock { width: 78px; margin-left: 0; display: flex; flex-direction: column; align-items: center; font-size: 15px; line-height: 23px; letter-spacing: -.45px; margin-top: -1px; }
.notify { margin-left: 7px; }
.show-desktop { width: 6px; height: 50px; border-left: 1px solid #b3b49d; margin-left: 14px; }
```
